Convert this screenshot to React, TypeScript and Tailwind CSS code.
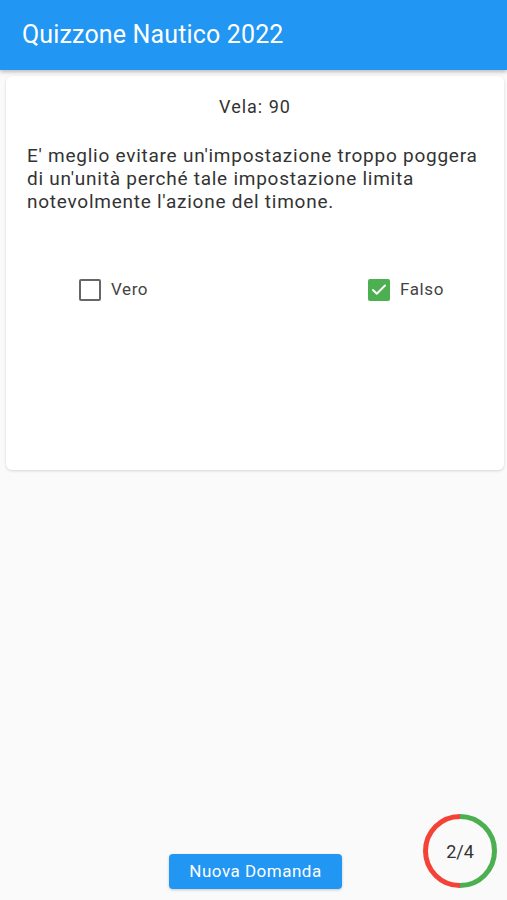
import { Check } from 'lucide-react';

function Ring({ value, total }: { value: number; total: number }) {
  // left half red, right half green, like the progress ring in the screenshot
  const r = 34.5;
  return (
    <div className="relative w-[76px] h-[76px]">
      <svg width="76" height="76" viewBox="0 0 76 76" className="absolute inset-0">
        <path d={`M38 ${38 - r} A${r} ${r} 0 0 0 38 ${38 + r}`} fill="none" stroke="#f44336" strokeWidth="5" />
        <path d={`M38 ${38 - r} A${r} ${r} 0 0 1 38 ${38 + r}`} fill="none" stroke="#4caf50" strokeWidth="5" />
      </svg>
      <div className="absolute inset-0 flex items-center justify-center text-[18px] text-[#333]">
        {value}/{total}
      </div>
    </div>
  );
}

function Option({ label, checked }: { label: string; checked: boolean }) {
  return (
    <div className="flex items-center gap-[10px]">
      {checked ? (
        <div className="w-[22px] h-[22px] rounded-[2px] bg-[#4caf50] flex items-center justify-center">
          <Check size={18} strokeWidth={2.6} color="#fff" />
        </div>
      ) : (
        <div className="w-[22px] h-[22px] rounded-[2px] border-[2.5px] border-[#666]" />
      )}
      <span className="text-[17px] tracking-[0.6px] text-[#444]">{label}</span>
    </div>
  );
}

export default function App() {
  return (
    <div className="w-[507px] h-[900px] bg-[#fafafa] flex flex-col font-['Roboto',sans-serif]">
      {/* App bar */}
      <div className="h-[70px] shrink-0 bg-[#2196f3] flex items-center px-[22px] shadow-[0_2px_4px_rgba(0,0,0,0.25)] relative z-10">
        <span className="text-white text-[25px] tracking-[0.15px] leading-none -mt-[2px]">Quizzone Nautico 2022</span>
      </div>

      {/* Question card */}
      <div className="ml-[6px] mr-[3px] mt-[6px] h-[394px] bg-white rounded-[6px] shadow-[0_1px_3px_rgba(0,0,0,0.15)] flex flex-col">
        <div className="text-center text-[18px] tracking-[1px] text-[#333] pt-[17px]">Vela: 90</div>
        <p className="px-[21px] pt-[24px] text-[19px] tracking-[0.75px] leading-[23px] text-[#333]">
          E' meglio evitare un'impostazione troppo poggera di un'unità perché tale impostazione limita notevolmente l'azione del timone.
        </p>
        <div className="flex justify-between pl-[73px] pr-[60px] mt-[64px]">
          <Option label="Vero" checked={false} />
          <Option label="Falso" checked />
        </div>
      </div>

      <div className="flex-1" />

      {/* Bottom bar */}
      <div className="relative h-[90px] flex items-end justify-center pl-[4px] pb-[11px]">
        <button className="w-[173px] h-[35px] bg-[#2196f3] rounded-[4px] text-white text-[17px] tracking-[0.5px] shadow-[0_1px_3px_rgba(0,0,0,0.2)]">
          Nuova Domanda
        </button>
        <div className="absolute right-[9px] bottom-[11px]">
          <Ring value={2} total={4} />
        </div>
      </div>
    </div>
  );
}
